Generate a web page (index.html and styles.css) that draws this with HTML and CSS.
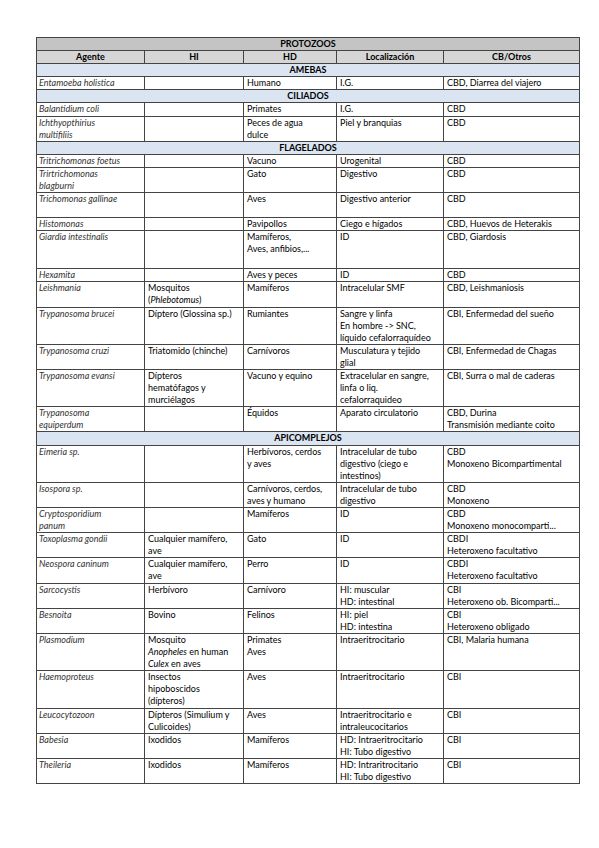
FILE: index.html
```html
<!DOCTYPE html>
<html lang="es">
<head>
<meta charset="utf-8">
<title>Protozoos</title>
<link rel="stylesheet" href="styles.css">
</head>
<body>
<table class="tabla">
<colgroup>
<col class="c1"><col class="c2"><col class="c3"><col class="c4"><col class="c5">
</colgroup>
<tr class="titulo"><td colspan="5">PROTOZOOS</td></tr>
<tr class="cab"><td>Agente</td><td>HI</td><td>HD</td><td>Localización</td><td>CB/Otros</td></tr>

<tr class="sec"><td colspan="5">AMEBAS</td></tr>
<tr><td class="ag">Entamoeba holistica</td><td></td><td>Humano</td><td>I.G.</td><td>CBD, Diarrea del viajero</td></tr>

<tr class="sec"><td colspan="5">CILIADOS</td></tr>
<tr><td class="ag">Balantidium coli</td><td></td><td>Primates</td><td>I.G.</td><td>CBD</td></tr>
<tr><td class="ag">Ichthyopthirius<br>multifiliis</td><td></td><td>Peces de agua<br>dulce</td><td>Piel y branquias</td><td>CBD</td></tr>

<tr class="sec"><td colspan="5">FLAGELADOS</td></tr>
<tr><td class="ag">Tritrichomonas foetus</td><td></td><td>Vacuno</td><td>Urogenital</td><td>CBD</td></tr>
<tr><td class="ag">Trirtrichomonas<br>blagburni</td><td></td><td>Gato</td><td>Digestivo</td><td>CBD</td></tr>
<tr class="l2"><td class="ag">Trichomonas gallinae</td><td></td><td>Aves</td><td>Digestivo anterior</td><td>CBD</td></tr>
<tr><td class="ag">Histomonas</td><td></td><td>Pavipollos</td><td>Ciego e hígados</td><td>CBD, Huevos de Heterakis</td></tr>
<tr class="l3"><td class="ag">Giardia intestinalis</td><td></td><td>Mamíferos,<br>Aves, anfibios,...</td><td>ID</td><td>CBD, Giardosis</td></tr>
<tr><td class="ag">Hexamita</td><td></td><td>Aves y peces</td><td>ID</td><td>CBD</td></tr>
<tr><td class="ag">Leishmania</td><td>Mosquitos<br>(<i>Phlebotomus</i>)</td><td>Mamíferos</td><td>Intracelular SMF</td><td>CBD, Leishmaniosis</td></tr>
<tr><td class="ag">Trypanosoma brucei</td><td>Díptero (Glossina sp.)</td><td>Rumiantes</td><td>Sangre y linfa<br>En hombre -&gt; SNC,<br>líquido cefalorraquídeo</td><td>CBI, Enfermedad del sueño</td></tr>
<tr><td class="ag">Trypanosoma cruzi</td><td>Triatomido (chinche)</td><td>Carnívoros</td><td>Musculatura y tejido<br>glial</td><td>CBI, Enfermedad de Chagas</td></tr>
<tr><td class="ag">Trypanosoma evansi</td><td>Dípteros<br>hematófagos y<br>murciélagos</td><td>Vacuno y equino</td><td>Extracelular en sangre,<br>linfa o liq.<br>cefalorraquideo</td><td>CBI, Surra o mal de caderas</td></tr>
<tr><td class="ag">Trypanosoma<br>equiperdum</td><td></td><td>Équidos</td><td>Aparato circulatorio</td><td>CBD, Durina<br>Transmisión mediante coito</td></tr>

<tr class="sec"><td colspan="5">APICOMPLEJOS</td></tr>
<tr><td class="ag">Eimeria sp.</td><td></td><td>Herbívoros, cerdos<br>y aves</td><td>Intracelular de tubo<br>digestivo (ciego e<br>intestinos)</td><td>CBD<br>Monoxeno Bicompartimental</td></tr>
<tr><td class="ag">Isospora sp.</td><td></td><td>Carnívoros, cerdos,<br>aves y humano</td><td>Intracelular de tubo<br>digestivo</td><td>CBD<br>Monoxeno</td></tr>
<tr><td class="ag">Cryptosporidium<br>panum</td><td></td><td>Mamíferos</td><td>ID</td><td>CBD<br>Monoxeno monocomparti...</td></tr>
<tr><td class="ag">Toxoplasma gondii</td><td>Cualquier mamífero,<br>ave</td><td>Gato</td><td>ID</td><td>CBDI<br>Heteroxeno facultativo</td></tr>
<tr><td class="ag">Neospora caninum</td><td>Cualquier mamífero,<br>ave</td><td>Perro</td><td>ID</td><td>CBDI<br>Heteroxeno facultativo</td></tr>
<tr><td class="ag">Sarcocystis</td><td>Herbívoro</td><td>Carnívoro</td><td>HI: muscular<br>HD: intestinal</td><td>CBI<br>Heteroxeno ob. Bicomparti...</td></tr>
<tr><td class="ag">Besnoita</td><td>Bovino</td><td>Felinos</td><td>HI: piel<br>HD: intestina</td><td>CBI<br>Heteroxeno obligado</td></tr>
<tr><td class="ag">Plasmodium</td><td>Mosquito<br><i>Anopheles</i> en human<br><i>Culex</i> en aves</td><td>Primates<br>Aves</td><td>Intraeritrocitario</td><td>CBI, Malaria humana</td></tr>
<tr><td class="ag">Haemoproteus</td><td>Insectos<br>hipoboscidos<br>(dípteros)</td><td>Aves</td><td>Intraeritrocitario</td><td>CBI</td></tr>
<tr><td class="ag">Leucocytozoon</td><td>Dípteros (Simulium y<br>Culicoides)</td><td>Aves</td><td>Intraeritrocitario e<br>intraleucocitarios</td><td>CBI</td></tr>
<tr><td class="ag">Babesia</td><td>Ixodidos</td><td>Mamíferos</td><td>HD: Intraeritrocitario<br>HI: Tubo digestivo</td><td>CBI</td></tr>
<tr><td class="ag">Theileria</td><td>Ixodidos</td><td>Mamíferos</td><td>HD: Intraritrocitario<br>HI: Tubo digestivo</td><td>CBI</td></tr>
</table>
</body>
</html>
```
FILE: styles.css
```css
html, body {
  margin: 0;
  padding: 0;
  background: #ffffff;
}
body {
  padding: 37px 0 0 36px;
  font-family: Lato, "Liberation Sans", sans-serif;
  font-size: 9px;
  color: #000;
}
.tabla {
  border-collapse: collapse;
  table-layout: fixed;
  width: 543px;
  border: 1px solid #3a3a3a;
}
.c1 { width: 108px; }
.c2 { width: 99px; }
.c3 { width: 93px; }
.c4 { width: 107px; }
.c5 { width: 136px; }
.tabla td {
  border: 1px solid #444;
  padding: 0 3px;
  line-height: 12.1px;
  vertical-align: top;
  white-space: nowrap;
  overflow: hidden;
  text-align: left;
}
.tabla td.ag {
  font-style: italic;
  color: #333;
  padding-left: 2px;
}
.titulo td {
  background: #c4c4c4;
  text-align: center;
  font-weight: bold;
}
.cab td {
  background: #d6d6d6;
  text-align: center;
  font-weight: bold;
}
.sec td {
  background: #dbe5f1;
  text-align: center;
  font-weight: bold;
}
.l2 td { height: 24px; }
.l3 td { height: 37px; }
```
